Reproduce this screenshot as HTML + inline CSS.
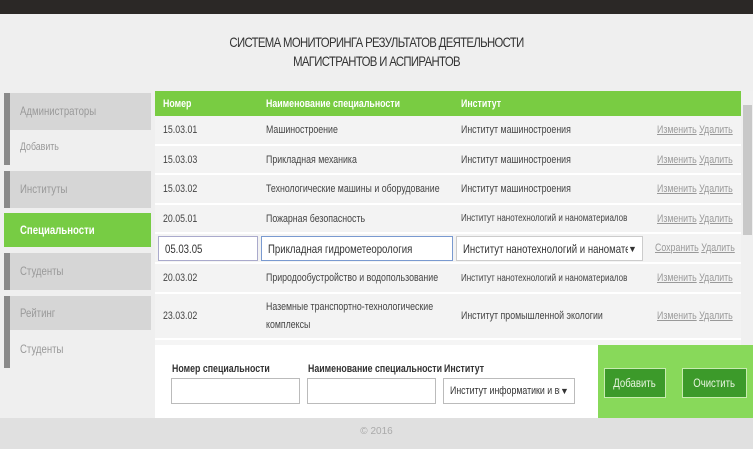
<!DOCTYPE html>
<html><head><meta charset="utf-8"><style>
*{box-sizing:border-box;margin:0;padding:0}
body{width:753px;height:449px;overflow:hidden;background:#efefef;font-family:"Liberation Sans",sans-serif;font-size:11px;color:#444;position:relative}
.a{position:absolute}
.n{display:inline-block;transform:scaleX(.8);transform-origin:left center;white-space:nowrap}
.top{left:0;top:0;width:753px;height:14px;background:#2b2826}
.hdr{left:0;top:14px;width:753px;height:73px;background:#efefef;text-align:center;font-size:14px;color:#333;padding-top:19px;line-height:19px;letter-spacing:-0.8px}
.hdr div{transform:scaleX(.81)}
.side{left:0;top:87px;width:153px;height:331px;background:#efefef}
.it{position:absolute;left:10px;width:141px;padding-left:10px;color:#999;font-size:12px}
.bar{position:absolute;left:4px;width:6px;background:#8a8a8a}
.main{left:155px;top:91px;width:586px;height:254px;background:#f5f5f5;overflow:hidden}
.row{position:absolute;left:0;width:586px;border-bottom:2px solid #fff;background:#f3f3f3}
.c{position:absolute;top:0;height:100%;display:flex;align-items:center;white-space:nowrap}
.lk{color:#999;text-decoration:underline}
.inp{position:absolute;background:#fff;border:1px solid #aac;height:25px;display:flex;align-items:center;padding-left:6px;font-size:12px;color:#333;overflow:hidden;white-space:nowrap}
.arr{position:absolute;right:0;top:0;bottom:0;width:14px;background:#fff;font-size:9px;display:flex;align-items:center}
.btn{position:absolute;top:368px;height:30px;background:#3c9a2a;border:1px solid #c8ecb0;color:#e8f5e0;display:flex;align-items:center;justify-content:center;font-size:12px}
</style></head><body>
<div class="a top"></div>
<div class="a hdr"><div>СИСТЕМА МОНИТОРИНГА РЕЗУЛЬТАТОВ ДЕЯТЕЛЬНОСТИ<br>МАГИСТРАНТОВ И АСПИРАНТОВ</div></div>
<div class="a side">
 <div class="bar" style="top:6px;height:72px"></div>
 <div class="it" style="top:6px;height:37px;line-height:37px;background:#d6d6d6"><span class="n">Администраторы</span></div>
 <div class="it" style="top:43px;height:35px;line-height:35px;font-size:11px"><span class="n">Добавить</span></div>
 <div class="bar" style="top:84px;height:37px"></div>
 <div class="it" style="top:84px;height:37px;line-height:37px;background:#d6d6d6"><span class="n">Институты</span></div>
 <div class="it" style="left:4px;width:147px;padding-left:16px;top:126px;height:34px;line-height:34px;background:#77cc44;color:#fff;font-weight:bold"><span class="n">Специальности</span></div>
 <div class="bar" style="top:166px;height:37px"></div>
 <div class="it" style="top:166px;height:37px;line-height:37px;background:#d6d6d6"><span class="n">Студенты</span></div>
 <div class="bar" style="top:209px;height:72px"></div>
 <div class="it" style="top:209px;height:34px;line-height:34px;background:#d6d6d6"><span class="n">Рейтинг</span></div>
 <div class="it" style="top:243px;height:38px;line-height:38px"><span class="n">Студенты</span></div>
</div>
<div class="a main">
 <div class="row" style="top:0;height:25px;background:#79cc42;border:none;color:#fff;font-weight:bold;font-size:11px">
  <div class="c" style="left:8px"><span class="n">Номер</span></div><div class="c" style="left:111px"><span class="n">Наименование специальности</span></div><div class="c" style="left:306px"><span class="n">Институт</span></div></div>
 <div class="row" style="top:25px;height:30px"><div class="c" style="left:8px"><span class="n">15.03.01</span></div><div class="c" style="left:111px"><span class="n">Машиностроение</span></div><div class="c" style="left:306px"><span class="n">Институт машиностроения</span></div><div class="c" style="left:502px"><span class="n"><span class="lk">Изменить</span> <span class="lk">Удалить</span></span></div></div>
 <div class="row" style="top:55px;height:29px"><div class="c" style="left:8px"><span class="n">15.03.03</span></div><div class="c" style="left:111px"><span class="n">Прикладная механика</span></div><div class="c" style="left:306px"><span class="n">Институт машиностроения</span></div><div class="c" style="left:502px"><span class="n"><span class="lk">Изменить</span> <span class="lk">Удалить</span></span></div></div>
 <div class="row" style="top:84px;height:30px"><div class="c" style="left:8px"><span class="n">15.03.02</span></div><div class="c" style="left:111px"><span class="n">Технологические машины и оборудование</span></div><div class="c" style="left:306px"><span class="n">Институт машиностроения</span></div><div class="c" style="left:502px"><span class="n"><span class="lk">Изменить</span> <span class="lk">Удалить</span></span></div></div>
 <div class="row" style="top:114px;height:29px"><div class="c" style="left:8px"><span class="n">20.05.01</span></div><div class="c" style="left:111px"><span class="n">Пожарная безопасность</span></div><div class="c" style="left:306px;font-size:10px"><span class="n">Институт нанотехнологий и наноматериалов</span></div><div class="c" style="left:502px"><span class="n"><span class="lk">Изменить</span> <span class="lk">Удалить</span></span></div></div>
 <div class="row" style="top:143px;height:30px"><div class="inp" style="left:3px;top:2px;width:100px"><span class="n">05.03.05</span></div><div class="inp" style="left:106px;top:2px;width:192px;border-color:#7a9ad0"><span class="n">Прикладная гидрометеорология</span></div><div class="inp" style="left:301px;top:2px;width:187px;border-color:#ccc;font-size:12px"><span class="n">Институт нанотехнологий и наноматериаг</span><span class="arr">▼</span></div><div class="c" style="left:500px"><span class="n"><span class="lk">Сохранить</span> <span class="lk">Удалить</span></span></div></div>
 <div class="row" style="top:173px;height:30px"><div class="c" style="left:8px"><span class="n">20.03.02</span></div><div class="c" style="left:111px"><span class="n">Природообустройство и водопользование</span></div><div class="c" style="left:306px;font-size:10px"><span class="n">Институт нанотехнологий и наноматериалов</span></div><div class="c" style="left:502px"><span class="n"><span class="lk">Изменить</span> <span class="lk">Удалить</span></span></div></div>
 <div class="row" style="top:203px;height:46px"><div class="c" style="left:8px"><span class="n">23.03.02</span></div><div class="c" style="left:111px;line-height:18px"><span class="n">Наземные транспортно-технологические<br>комплексы</span></div><div class="c" style="left:306px"><span class="n">Институт промышленной экологии</span></div><div class="c" style="left:502px"><span class="n"><span class="lk">Изменить</span> <span class="lk">Удалить</span></span></div></div>
</div>
<div class="a" style="left:741px;top:91px;width:12px;height:254px;background:#f0f0f0"><div style="position:absolute;left:2px;top:14px;width:9px;height:130px;background:#c8c8c8"></div></div>
<div class="a" style="left:155px;top:345px;width:443px;height:73px;background:#fff"></div>
<div class="a" style="left:598px;top:345px;width:155px;height:73px;background:#88d95a"></div>
<div class="a" style="left:172px;top:363px;font-weight:bold;color:#333"><span class="n">Номер специальности</span></div>
<div class="a" style="left:308px;top:363px;font-weight:bold;color:#333"><span class="n">Наименование специальности</span></div>
<div class="a" style="left:444px;top:363px;font-weight:bold;color:#333"><span class="n">Институт</span></div>
<div class="a" style="left:171px;top:378px;width:129px;height:26px;border:1px solid #bbb;background:#fff"></div>
<div class="a" style="left:307px;top:378px;width:129px;height:26px;border:1px solid #bbb;background:#fff"></div>
<div class="a" style="left:443px;top:378px;width:132px;height:26px;border:1px solid #bbb;background:#fff;padding:6px 0 0 6px;color:#333;overflow:hidden;white-space:nowrap"><span class="n">Институт информатики и вы</span><span class="arr">▼</span></div>
<div class="btn" style="left:604px;width:62px"><span class="n" style="transform-origin:center">Добавить</span></div>
<div class="btn" style="left:682px;width:65px"><span class="n" style="transform-origin:center">Очистить</span></div>
<div class="a" style="left:0;top:418px;width:753px;height:31px;background:#e0e0e0;text-align:center;line-height:28px;color:#aaa;font-size:10px">© 2016</div>
</body></html>
